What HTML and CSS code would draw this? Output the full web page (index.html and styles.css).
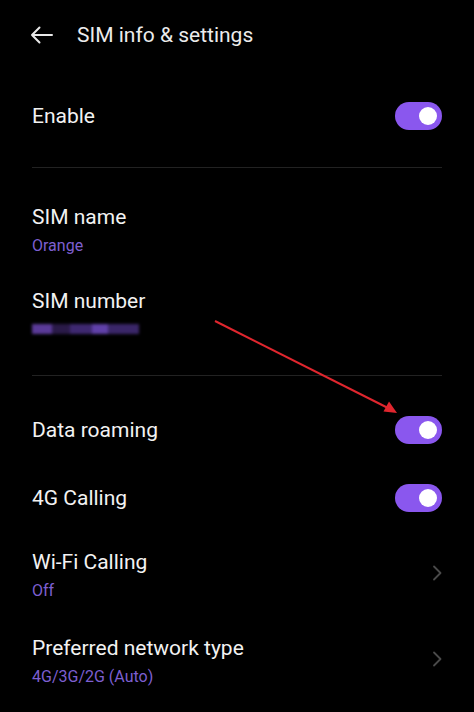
FILE: index.html
```html
<!DOCTYPE html>
<html lang="en">
  <head>
    <meta charset="UTF-8" />
    <meta name="viewport" content="width=device-width, initial-scale=1.0" />
    <title>SIM info &amp; settings</title>
    <link rel="stylesheet" href="styles.css">
  </head>
  <body>
    <header class="topbar">
      <svg class="back" width="24" height="18" viewBox="0 0 24 18">
        <path d="M22 9H2M9.5 1.5L2 9l7.5 7.5" fill="none" stroke="#e8e8e8" stroke-width="2" stroke-linecap="round" stroke-linejoin="round" />
      </svg>
      <h1 class="title">SIM info &amp; settings</h1>
    </header>

    <main class="list">
      <section class="group first">
        <div class="item">
          <span class="label">Enable</span>
          <span class="switch"><span class="knob"></span></span>
        </div>
      </section>

      <section class="group sim">
        <div class="item tall">
          <div class="text">
            <span class="label">SIM name</span>
            <span class="sub">Orange</span>
          </div>
        </div>
        <div class="item tall">
          <div class="text">
            <span class="label">SIM number</span>
            <span class="hidden-number">
              <i class="b1"></i><i class="b2"></i><i class="b3"></i><i class="b4"></i><i class="b5"></i>
            </span>
          </div>
        </div>
      </section>

      <section class="group last">
        <div class="item">
          <span class="label">Data roaming</span>
          <span class="switch"><span class="knob"></span></span>
        </div>
        <div class="item">
          <span class="label">4G Calling</span>
          <span class="switch"><span class="knob"></span></span>
        </div>
        <div class="item tall">
          <div class="text">
            <span class="label">Wi-Fi Calling</span>
            <span class="sub">Off</span>
          </div>
          <svg class="chevron" width="10" height="16" viewBox="0 0 10 16">
            <path d="M2 1.5L8.5 8 2 14.5" fill="none" stroke="#4a4a4a" stroke-width="1.8" stroke-linecap="round" stroke-linejoin="round" />
          </svg>
        </div>
        <div class="item tall">
          <div class="text">
            <span class="label">Preferred network type</span>
            <span class="sub">4G/3G/2G (Auto)</span>
          </div>
          <svg class="chevron" width="10" height="16" viewBox="0 0 10 16">
            <path d="M2 1.5L8.5 8 2 14.5" fill="none" stroke="#4a4a4a" stroke-width="1.8" stroke-linecap="round" stroke-linejoin="round" />
          </svg>
        </div>
      </section>
    </main>

    <!-- annotation arrow drawn on top of the screenshot -->
    <svg class="annotation" width="474" height="712" viewBox="0 0 474 712">
      <line x1="215" y1="321" x2="388" y2="408" stroke="#e0262e" stroke-width="2" />
      <path d="M397 413L383.5 411.5 389 401.5Z" fill="#e0262e" />
    </svg>
  </body>
</html>
```

FILE: styles.css
```css
body {
  margin: 0;
  background: #000;
  color: #f2f2f2;
  font-family: Roboto, "Noto Sans", sans-serif;
  width: 474px;
  height: 712px;
  overflow: hidden;
  position: relative;
}

.topbar {
  height: 70px;
  display: flex;
  align-items: center;
  padding-left: 30px;
}

.back {
  margin-right: 23px;
}

.title {
  margin: 0;
  font-size: 21px;
  font-weight: 400;
  color: #ececec;
}

.list {
  padding: 0 32px;
}

.group {
  border-bottom: 1px solid #222;
  padding: 20px 0 17px;
}

.group.first {
  padding-top: 12px;
}

.group.sim {
  padding-bottom: 19px;
}

.group.last {
  border-bottom: none;
  padding-top: 20px;
}

.item {
  height: 68px;
  display: flex;
  align-items: center;
  justify-content: space-between;
}

.item.tall {
  height: 86px;
}

.group.sim .item.tall {
  height: 84px;
}

.text {
  display: flex;
  flex-direction: column;
}

.label {
  font-size: 21px;
  line-height: 24px;
}

.sub {
  margin-top: 7px;
  font-size: 16px;
  line-height: 19px;
  color: #7d5fd0;
}

.switch {
  width: 47px;
  height: 28px;
  border-radius: 14px;
  background: #8a57ee;
  display: flex;
  align-items: center;
  justify-content: flex-end;
  padding-right: 5px;
  box-sizing: border-box;
}

.knob {
  width: 18px;
  height: 18px;
  border-radius: 50%;
  background: #fff;
}

.chevron {
  margin-top: -4px;
}

.hidden-number {
  margin-top: 6px;
  height: 20px;
  width: 107px;
  display: flex;
  align-items: center;
  filter: blur(1.5px);
}

.hidden-number i {
  display: block;
  height: 10px;
}

.hidden-number .b1 { width: 20px; background: #5a3a98; }
.hidden-number .b2 { width: 18px; background: #2a1a48; }
.hidden-number .b3 { width: 22px; background: #3e2870; }
.hidden-number .b4 { width: 16px; background: #6040a8; }
.hidden-number .b5 { width: 31px; background: #3a2668; }

.annotation {
  position: absolute;
  left: 0;
  top: 0;
  pointer-events: none;
}
```
